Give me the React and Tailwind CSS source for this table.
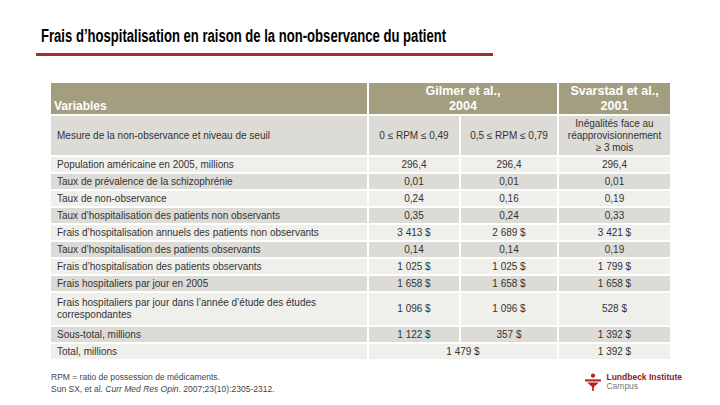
import React from "react";

const DARK = "bg-[#dddbd6]";
const LIGHT = "bg-[#efefec]";

const rows = [
  { label: "Population américaine en 2005, millions", v: ["296,4", "296,4", "296,4"] },
  { label: "Taux de prévalence de la schizophrénie", v: ["0,01", "0,01", "0,01"] },
  { label: "Taux de non-observance", v: ["0,24", "0,16", "0,19"] },
  { label: "Taux d’hospitalisation des patients non observants", v: ["0,35", "0,24", "0,33"] },
  { label: "Frais d’hospitalisation annuels des patients non observants", v: ["3 413 $", "2 689 $", "3 421 $"] },
  { label: "Taux d’hospitalisation des patients observants", v: ["0,14", "0,14", "0,19"] },
  { label: "Frais d’hospitalisation des patients observants", v: ["1 025 $", "1 025 $", "1 799 $"] },
  { label: "Frais hospitaliers par jour en 2005", v: ["1 658 $", "1 658 $", "1 658 $"] },
];

function Cell({ bg, className = "", children }) {
  return (
    <div className={`${bg} flex items-center ${className}`}>{children}</div>
  );
}

export default function App() {
  return (
    <div
      className="w-[720px] h-[405px] bg-white relative overflow-hidden text-[#333]"
      style={{ fontFamily: '"Liberation Sans", Arial, sans-serif' }}
    >
      <div className="pt-[25px] pl-[41px]">
        <h1 className="inline-block origin-left scale-x-[0.727] whitespace-nowrap text-[18px] font-bold text-black leading-[22px]">
          Frais d’hospitalisation en raison de la non-observance du patient
        </h1>
      </div>
      <div className="ml-[36px] mt-[4px] w-[457px] h-[3px] bg-[#9b2f2f]" />

      <div className="ml-[51px] mt-[27px] grid grid-cols-[316px_90px_96px_111px] gap-[2px] text-[10px] leading-[12px]">
        {/* header */}
        <div className="h-[31px] bg-[#a39e7f] text-white font-bold text-[12px] flex items-end pl-[3px] pb-[2px]">
          Variables
        </div>
        <div className="col-span-2 bg-[#a39e7f] text-white font-bold text-[12.5px] leading-[15px] flex items-center justify-center text-center">
          Gilmer et al.,<br />2004
        </div>
        <div className="bg-[#a39e7f] text-white font-bold text-[12.5px] leading-[15px] flex items-center justify-center text-center">
          Svarstad et al.,<br />2001
        </div>

        {/* row 1 */}
        <Cell bg={DARK} className="h-[39px] pl-[6px]">Mesure de la non-observance et niveau de seuil</Cell>
        <Cell bg={DARK} className="justify-center">0 ≤ RPM ≤ 0,49</Cell>
        <Cell bg={DARK} className="justify-center">0,5 ≤ RPM ≤ 0,79</Cell>
        <Cell bg={DARK} className="justify-center text-center">
          <span>Inégalités face au<br />réapprovisionnement<br />≥ 3 mois</span>
        </Cell>

        {rows.map((r, i) => {
          const bg = i % 2 === 0 ? LIGHT : DARK;
          return (
            <React.Fragment key={i}>
              <Cell bg={bg} className="h-[15px] pl-[6px]">{r.label}</Cell>
              <Cell bg={bg} className="justify-center">{r.v[0]}</Cell>
              <Cell bg={bg} className="justify-center">{r.v[1]}</Cell>
              <Cell bg={bg} className="justify-center">{r.v[2]}</Cell>
            </React.Fragment>
          );
        })}

        <Cell bg={LIGHT} className="h-[32px] pl-[6px]">
          <span>Frais hospitaliers par jour dans l’année d’étude des études<br />correspondantes</span>
        </Cell>
        <Cell bg={LIGHT} className="justify-center">1 096 $</Cell>
        <Cell bg={LIGHT} className="justify-center">1 096 $</Cell>
        <Cell bg={LIGHT} className="justify-center">528 $</Cell>

        <Cell bg={DARK} className="h-[15px] pl-[6px]">Sous-total, millions</Cell>
        <Cell bg={DARK} className="justify-center">1 122 $</Cell>
        <Cell bg={DARK} className="justify-center">357 $</Cell>
        <Cell bg={DARK} className="justify-center">1 392 $</Cell>

        <Cell bg={LIGHT} className="h-[15px] pl-[6px]">Total, millions</Cell>
        <Cell bg={LIGHT} className="col-span-2 justify-center">1 479 $</Cell>
        <Cell bg={LIGHT} className="justify-center">1 392 $</Cell>
      </div>

      <div className="flex items-start justify-between w-[631px] ml-[51px] mt-[12px]">
        <div className="text-[8.5px] leading-[12px] text-[#444]">
          <div>RPM = ratio de possession de médicaments.</div>
          <div>
            Sun SX, et al. <span className="italic">Curr Med Res Opin</span>. 2007;23(10):2305-2312.
          </div>
        </div>
        <div className="flex items-center gap-[4px] mt-[2px]">
          <svg width="18" height="18" viewBox="0 0 17 17">
            <circle cx="8.5" cy="2.5" r="2" fill="#b0242b" />
            <rect x="1" y="6" width="15" height="2" fill="#b0242b" />
            <path d="M3 9 L14 9 L8.5 14 Z" fill="#b0242b" />
            <rect x="7.7" y="13" width="1.6" height="4" fill="#b0242b" />
          </svg>
          <div className="leading-[9px]">
            <div className="text-[8.5px] font-bold text-[#8b1a1f]">Lundbeck Institute</div>
            <div className="text-[8.5px] text-[#777]">Campus</div>
          </div>
        </div>
      </div>
    </div>
  );
}
